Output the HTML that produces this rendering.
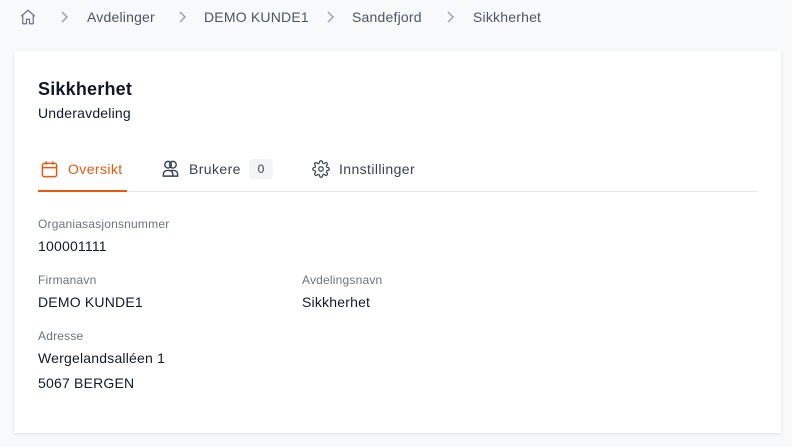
<!DOCTYPE html>
<html><head><meta charset="utf-8"><style>
*{box-sizing:border-box;margin:0;padding:0}
body{width:792px;height:447px;background:#f8f9fb;font-family:"Liberation Sans",sans-serif;color:#111827;position:relative;overflow:hidden}
.a{position:absolute;white-space:nowrap}
.bc{font-size:14px;color:#4b5563;top:9px;letter-spacing:.2px}
.card{position:absolute;left:14px;top:51px;width:767px;height:382px;background:#fff;box-shadow:0 1px 3px rgba(0,0,0,.1)}
.lab{font-size:12px;color:#6b7280;letter-spacing:.2px}
.val{font-size:14px;color:#111827;letter-spacing:.2px}
.t{font-size:14px;letter-spacing:.4px}
</style></head><body>
<svg class="a" style="left:19px;top:8px" width="18" height="18" viewBox="0 0 24 24" fill="none" stroke="#6b7280" stroke-width="1.6" stroke-linejoin="round"><path d="M3 11 12 3l9 8M5 9.5V21h5v-6h4v6h5V9.5"/></svg>
<svg class="a" style="left:58px;top:10px" width="14" height="14" viewBox="0 0 14 14" fill="none" stroke="#9ca3af" stroke-width="1.5"><path d="M4 2l5 5-5 5"/></svg>
<div class="a bc" style="left:87px">Avdelinger</div>
<svg class="a" style="left:176px;top:10px" width="14" height="14" viewBox="0 0 14 14" fill="none" stroke="#9ca3af" stroke-width="1.5"><path d="M4 2l5 5-5 5"/></svg>
<div class="a bc" style="left:204px">DEMO KUNDE1</div>
<svg class="a" style="left:324px;top:10px" width="14" height="14" viewBox="0 0 14 14" fill="none" stroke="#9ca3af" stroke-width="1.5"><path d="M4 2l5 5-5 5"/></svg>
<div class="a bc" style="left:352px">Sandefjord</div>
<svg class="a" style="left:444px;top:10px" width="14" height="14" viewBox="0 0 14 14" fill="none" stroke="#9ca3af" stroke-width="1.5"><path d="M4 2l5 5-5 5"/></svg>
<div class="a bc" style="left:473px">Sikkherhet</div>
<div class="card"></div>
<div class="a" style="left:38px;top:79px;font-size:18px;font-weight:bold;letter-spacing:.2px">Sikkherhet</div>
<div class="a val" style="left:38px;top:105px">Underavdeling</div>
<svg class="a" style="left:40px;top:160px" width="19" height="19" viewBox="0 0 20 20" fill="none" stroke="#ea580c" stroke-width="1.5" stroke-linejoin="round"><rect x="2.5" y="3.5" width="15" height="14" rx="2"/><path d="M2.5 8h15M6.5 1.5v3.5M13.5 1.5v3.5"/></svg>
<div class="a t" style="left:68px;top:161px;color:#ea580c">Oversikt</div>
<div class="a" style="left:38px;top:190px;width:89px;height:2px;background:#ea580c"></div>
<div class="a" style="left:127px;top:191px;width:630px;height:1px;background:#e5e7eb"></div>
<svg class="a" style="left:161px;top:159px" width="19" height="19" viewBox="0 0 20 20" fill="none" stroke="#374151" stroke-width="1.5"><circle cx="7.5" cy="6" r="3.5"/><circle cx="12.5" cy="6" r="3.5"/><path d="M2.5 18v-2a4 4 0 014-4h2a4 4 0 014 4v2zM10 12.3a4 4 0 011.5-.3h2a4 4 0 014 4v2h-5"/></svg>
<div class="a t" style="left:189px;top:161px;color:#374151">Brukere</div>
<div class="a" style="left:249px;top:159px;width:24px;height:20px;background:#f3f4f6;border-radius:4px;font-size:12px;color:#374151;text-align:center;line-height:20px">0</div>
<svg class="a" style="left:312px;top:160px" width="18" height="18" viewBox="0 0 24 24" fill="none" stroke="#374151" stroke-width="1.6"><circle cx="12" cy="12" r="3"/><path d="M19.4 15a1.7 1.7 0 00.3 1.8l.1.1a2 2 0 11-2.8 2.8l-.1-.1a1.7 1.7 0 00-1.8-.3 1.7 1.7 0 00-1 1.5V21a2 2 0 11-4 0v-.1a1.7 1.7 0 00-1.1-1.5 1.7 1.7 0 00-1.8.3l-.1.1a2 2 0 11-2.8-2.8l.1-.1a1.7 1.7 0 00.3-1.8 1.7 1.7 0 00-1.5-1H3a2 2 0 110-4h.1a1.7 1.7 0 001.5-1.1 1.7 1.7 0 00-.3-1.8l-.1-.1a2 2 0 112.8-2.8l.1.1a1.7 1.7 0 001.8.3H9a1.7 1.7 0 001-1.5V3a2 2 0 114 0v.1a1.7 1.7 0 001 1.5 1.7 1.7 0 001.8-.3l.1-.1a2 2 0 112.8 2.8l-.1.1a1.7 1.7 0 00-.3 1.8V9a1.7 1.7 0 001.5 1H21a2 2 0 110 4h-.1a1.7 1.7 0 00-1.5 1z"/></svg>
<div class="a t" style="left:339px;top:161px;color:#374151">Innstillinger</div>
<div class="a lab" style="left:38px;top:217px">Organiasasjonsnummer</div>
<div class="a val" style="left:38px;top:238px">100001111</div>
<div class="a lab" style="left:38px;top:273px">Firmanavn</div>
<div class="a val" style="left:38px;top:294px">DEMO KUNDE1</div>
<div class="a lab" style="left:302px;top:273px">Avdelingsnavn</div>
<div class="a val" style="left:302px;top:294px">Sikkherhet</div>
<div class="a lab" style="left:38px;top:329px">Adresse</div>
<div class="a val" style="left:38px;top:350px">Wergelandsalléen 1</div>
<div class="a val" style="left:38px;top:375px">5067 BERGEN</div>
</body></html>
